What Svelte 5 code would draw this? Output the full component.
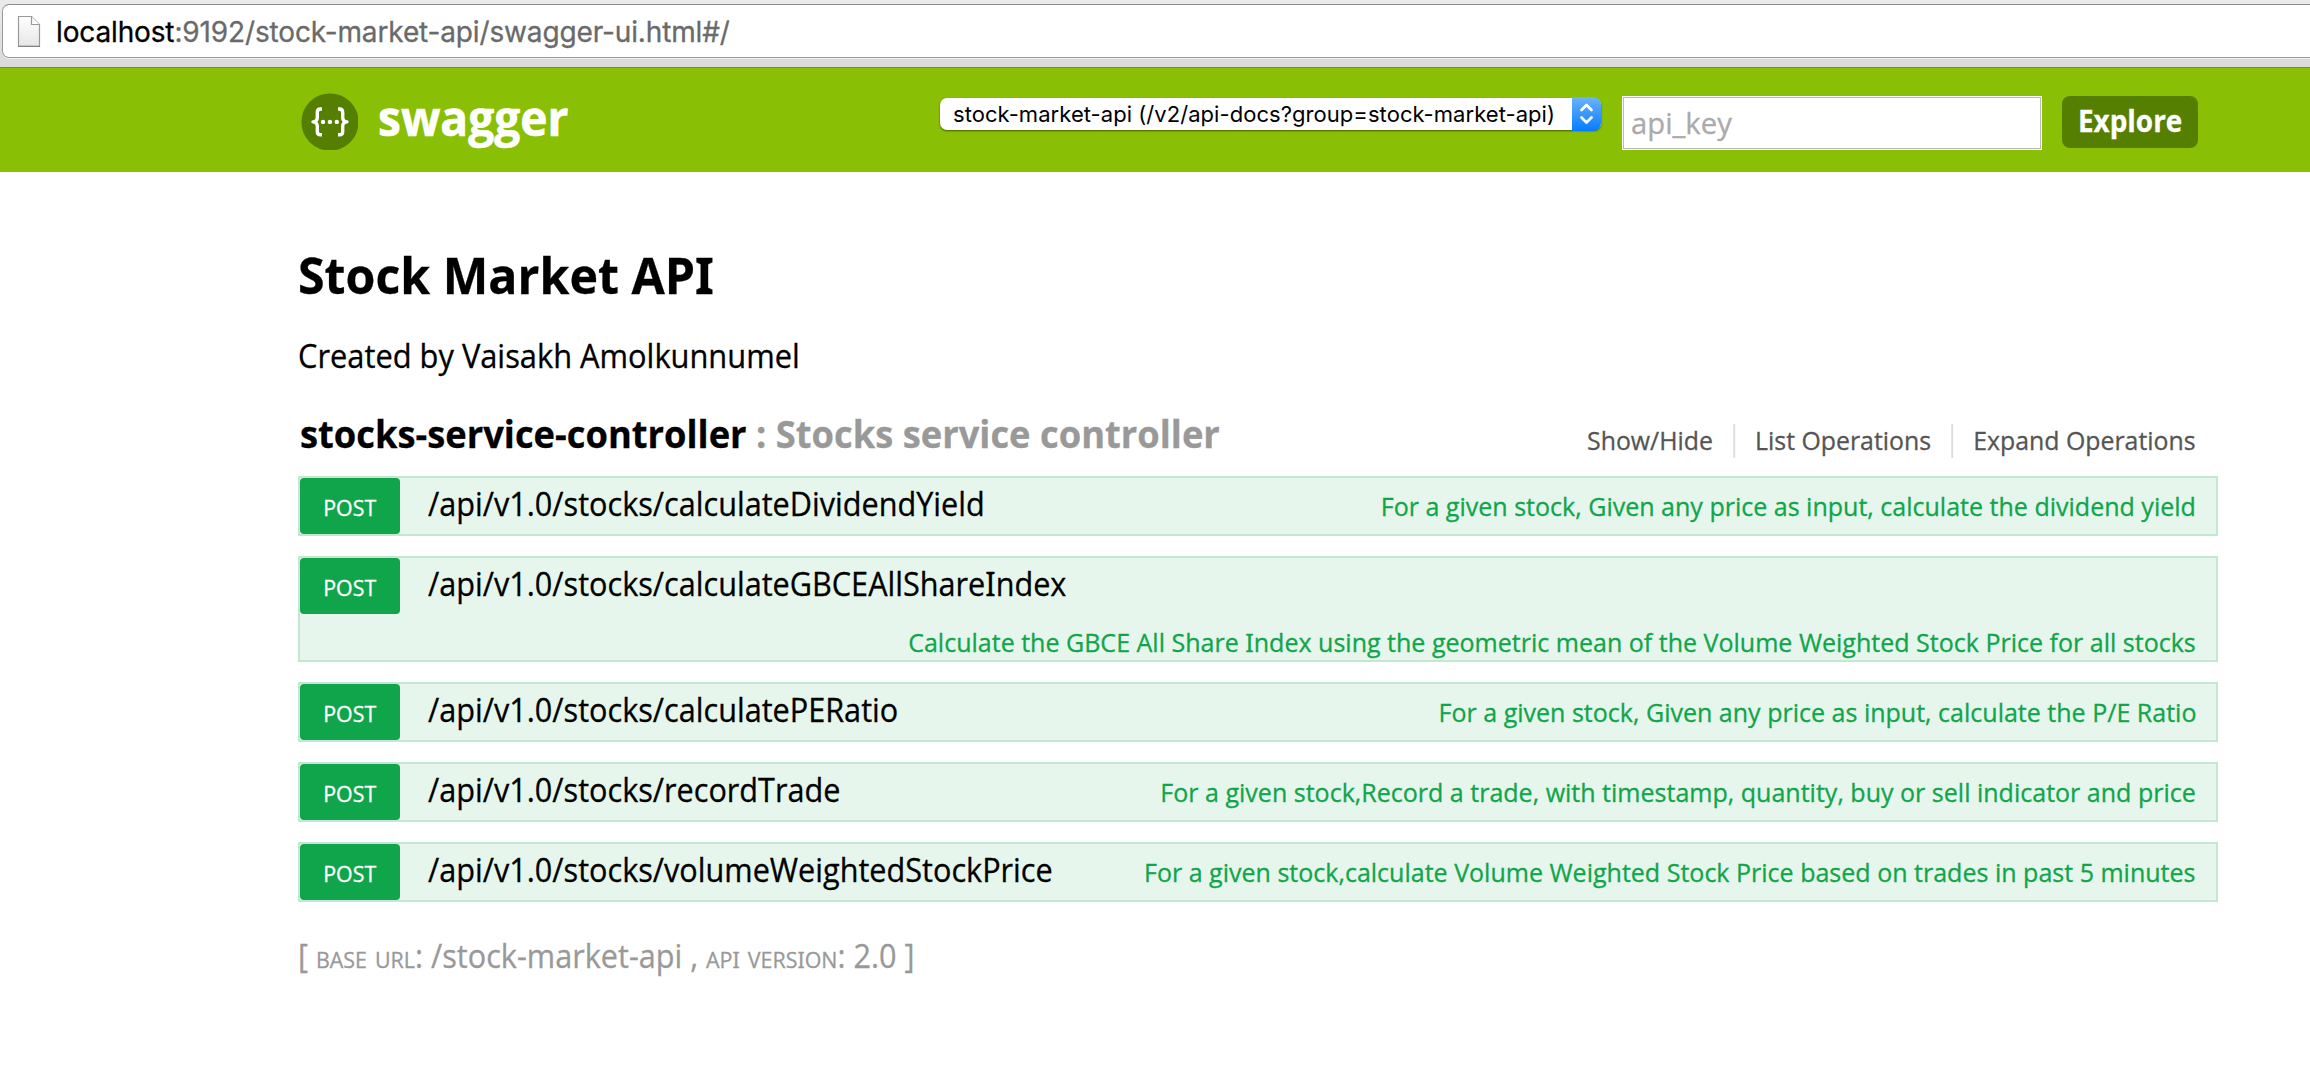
<script>
  const operations = [
    { path: '/api/v1.0/stocks/calculateDividendYield', summary: 'For a given stock, Given any price as input, calculate the dividend yield' },
    { path: '/api/v1.0/stocks/calculateGBCEAllShareIndex', summary: 'Calculate the GBCE All Share Index using the geometric mean of the Volume Weighted Stock Price for all stocks' },
    { path: '/api/v1.0/stocks/calculatePERatio', summary: 'For a given stock, Given any price as input, calculate the P/E Ratio' },
    { path: '/api/v1.0/stocks/recordTrade', summary: 'For a given stock,Record a trade, with timestamp, quantity, buy or sell indicator and price' },
    { path: '/api/v1.0/stocks/volumeWeightedStockPrice', summary: 'For a given stock,calculate Volume Weighted Stock Price based on trades in past 5 minutes' }
  ];
</script>

<!-- Sets the capital I in a face that draws it with serifs. -->
{#snippet prose(text)}{#each text.split('I') as part, n}{#if n}<i>I</i>{/if}{part}{/each}{/snippet}

<div class="toolbar">
  <div class="address">
    <svg class="doc" width="24" height="34" viewBox="0 0 24 34">
      <defs>
        <linearGradient id="paper" x1="0" y1="0" x2="0" y2="1">
          <stop offset="0" stop-color="#fff" />
          <stop offset="1" stop-color="#e6e6e8" />
        </linearGradient>
      </defs>
      <path d="M1.5 1.5h13l8 8v22h-21z" fill="url(#paper)" stroke="#9a9a9a" stroke-width="1.2" />
      <path d="M14.5 1.5v8h8" fill="#fff" stroke="#9a9a9a" stroke-width="1.2" />
      <path d="M1 31.3h22" stroke="#808080" stroke-width="1.2" />
    </svg>
    <span class="url"><b>localhost</b>:9192/stock-market-api/swagger-ui.html#/</span>
  </div>
</div>

<header>
  <div class="brand">
    <svg width="57" height="57" viewBox="0 0 57 57">
      <circle cx="29" cy="29" r="28.6" fill="#547f00" />
      <g fill="none" stroke="#fff" stroke-width="3.4" stroke-linejoin="round">
        <path d="M21 16h-1.5q-3.2 0-3.2 3.4v5.1q0 4-4.300 4.400q4.300 .4 4.300 4.400v5.100q0 3.400 3.200 3.400H21" />
        <path d="M37 16h1.500q3.200 0 3.200 3.400v5.100q0 4 4.300 4.400q-4.300 .4-4.300 4.400v5.100q0 3.400-3.200 3.400H37" />
      </g>
      <g fill="#fff">
        <circle cx="22" cy="28.900" r="2.200" />
        <circle cx="28.900" cy="28.900" r="2.200" />
        <circle cx="35.800" cy="28.900" r="2.200" />
      </g>
    </svg>
    <span class="name">swagger</span>
  </div>
  <div class="controls">
    <div class="select">
      <span>stock-market-api (/v2/api-docs?group=stock-market-api)</span>
      <div class="stepper">
        <svg width="29" height="34" viewBox="0 0 29 34" fill="none" stroke="#fff" stroke-width="2.700" stroke-linecap="round" stroke-linejoin="round">
          <path d="M9.500 13l5-5 5 5M9.500 20.500l5 5 5-5" />
        </svg>
      </div>
    </div>
    <div class="key"><span>api_key</span></div>
    <div class="explore"><span>Explore</span></div>
  </div>
</header>

<main>
  <h1><span class="fit">{@render prose('Stock Market API')}</span></h1>
  <p class="author"><span class="fit">Created by Vaisakh Amolkunnumel</span></p>

  <div class="resource">
    <h2><span class="fit">stocks-service-controller <em>: Stocks service controller</em></span></h2>
    <ul>
      <li>Show/Hide</li>
      <li>List Operations</li>
      <li>Expand Operations</li>
    </ul>
  </div>

  <div class="operations">
    {#each operations as op}
      <div class="operation">
        <div class="method"><span>POST</span></div>
        <div class="path"><span class="fit">{@render prose(op.path)}</span></div>
        <div class="summary"><span class="fit">{@render prose(op.summary)}</span></div>
      </div>
    {/each}
  </div>

  <p class="footer"><span class="fit">[ <small>BASE URL</small>: /stock-market-api , <small>{@render prose('API VERSION')}</small>: 2.0 ]</span></p>
</main>

<style>
  :global(body) {
    background: #fff;
    overflow: hidden;
    font-family: "Open Sans", "Noto Sans", sans-serif;
    color: #000;
  }
  :global(#app) { overflow: hidden; }
  h1, h2, p, ul { margin: 0; padding: 0; }
  i { font-family: "Noto Sans", sans-serif; font-style: normal; line-height: 1; }
  .fit {
    display: inline-block;
    white-space: nowrap;
    transform: scaleX(0.957);
    transform-origin: left;
    -webkit-text-stroke: 0.3px currentColor;
  }

  .toolbar {
    box-sizing: border-box;
    height: 68px;
    padding: 4px 0 0 2px;
    background: linear-gradient(#ebebeb, #dadada);
    border-bottom: 1px solid #7b7b7b;
    overflow: hidden;
  }
  .address {
    box-sizing: border-box;
    display: flex;
    align-items: flex-start;
    height: 54px;
    margin-right: -12px;
    padding-left: 14px;
    background: #fff;
    border: 1px solid #9a9a9a;
    border-top-color: #8c8c8c;
    border-radius: 7px;
    box-shadow: 0 1px 0 #f2f2f2;
  }
  .doc { flex: none; margin-top: 10px; }
  .url {
    margin: 7px 0 0 15px;
    font: 28px/40px Inter, sans-serif;
    letter-spacing: -0.14px;
    -webkit-text-stroke: 0.3px currentColor;
    color: #6a6a6a;
    white-space: nowrap;
  }
  .url b { font-weight: 400; color: #000; }

  header {
    box-sizing: border-box;
    display: flex;
    align-items: flex-start;
    justify-content: space-between;
    height: 104px;
    padding: 0 112px 0 301px;
    background: #89bf04;
  }
  .brand { display: flex; align-items: flex-start; gap: 20px; }
  .brand svg { margin-top: 25px; }
  .name {
    margin-top: 20px;
    font-size: 48px;
    line-height: 60px;
    font-weight: 700;
    color: #fff;
    transform: scaleX(0.96);
    transform-origin: left;
    -webkit-text-stroke: 0.6px currentColor;
  }
  .controls { display: flex; align-items: flex-start; }
  .select {
    box-sizing: border-box;
    display: flex;
    justify-content: space-between;
    width: 661px;
    height: 32px;
    margin-top: 30px;
    padding-left: 13px;
    background: #fff;
    border-radius: 7px;
    box-shadow: 0 1px 2px rgba(0, 0, 0, 0.5);
    font: 22px/32px Inter, sans-serif;
    letter-spacing: 0.05px;
    white-space: nowrap;
  }
  .stepper {
    height: 34px;
    margin-top: -1px;
    border-radius: 0 8px 8px 0;
    background: linear-gradient(#6cb3fa, #077cff);
    overflow: hidden;
  }
  .stepper svg { display: block; }
  .key {
    box-sizing: border-box;
    width: 420px;
    height: 54px;
    margin: 28px 0 0 21px;
    padding: 6px 0 0 8px;
    border: 1px solid #fff;
    outline: 1px solid #bbb;
    outline-offset: -2px;
    background: #fff;
    font-size: 30px;
    line-height: 40px;
    color: #aaa;
  }
  .key span, .method span, .explore span {
    display: inline-block;
    transform: scaleX(0.955);
    -webkit-text-stroke: 0.3px currentColor;
  }
  .key span { transform: scaleX(0.975); transform-origin: left; }
  .explore span { transform: scaleX(0.93); }
  .explore {
    width: 136px;
    height: 52px;
    margin: 28px 0 0 20px;
    border-radius: 8px;
    background: #547f00;
    color: #fff;
    font-size: 30px;
    font-weight: 700;
    line-height: 50px;
    text-align: center;
  }

  main { padding: 73px 92px 0 298px; }
  h1 { font-size: 50px; line-height: 60px; }
  h1 .fit { transform: scaleX(0.966); }
  .author { margin-top: 31px; font-size: 32px; line-height: 40px; }
  .author .fit { transform: scaleX(0.963); }
  .resource {
    display: flex;
    justify-content: space-between;
    height: 48px;
    margin-top: 33px;
    padding: 0 22px 0 2px;
  }
  h2 { font-size: 38px; line-height: 48px; }
  h2 .fit { transform: scaleX(0.9555); }
  h2 em { font-style: normal; color: #999; }
  ul {
    display: flex;
    list-style: none;
    height: 34px;
    margin-top: 15px;
    font-size: 26px;
    line-height: 32px;
    color: #555;
    transform: scaleX(0.956);
    transform-origin: right;
    -webkit-text-stroke: 0.3px currentColor;
  }
  li { padding: 0 21px; border-left: 2px solid #ddd; white-space: nowrap; }
  li:first-child { border-left: 0; }
  li:last-child { padding-right: 0; }

  .operations { display: grid; gap: 20px; margin-top: 19px; }
  .operation {
    display: flex;
    flex-wrap: wrap;
    align-items: flex-start;
    align-content: flex-start;
    background: #e7f6ec;
    border: 2px solid #c3e8d1;
  }
  .method {
    width: 100px;
    height: 56px;
    border-radius: 4px;
    background: #10a54a;
    color: #fff;
    font-size: 22.4px;
    line-height: 60px;
    text-align: center;
  }
  .path { height: 40px; margin: 6px 0 0 28px; font-size: 32px; line-height: 40px; }
  .summary {
    height: 36px;
    margin: 10px 20px 0 auto;
    font-size: 26px;
    line-height: 36px;
    color: #10a54a;
  }
  .path .fit, .summary .fit { display: block; }
  .summary .fit { transform: scaleX(0.9625); transform-origin: right; }

  .footer { margin-top: 34px; font-size: 32px; line-height: 40px; color: #999; }
  small { font-size: 22.4px; word-spacing: 2.5px; }
</style>
